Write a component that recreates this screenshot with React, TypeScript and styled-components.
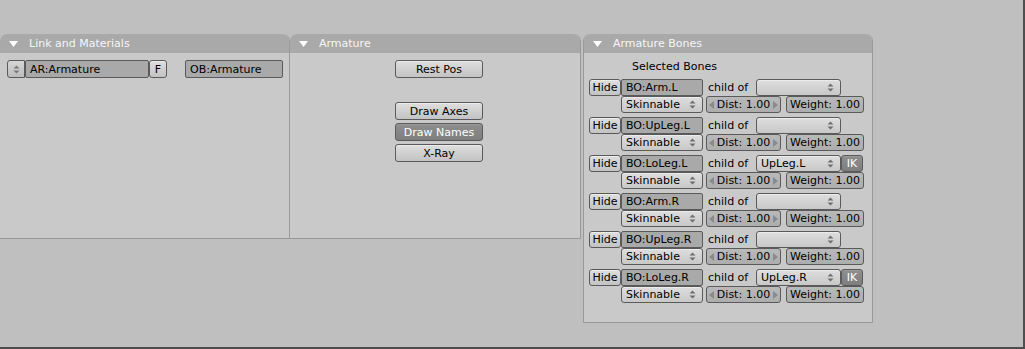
import React from 'react'
import styled, { createGlobalStyle } from 'styled-components'

const GlobalStyle = createGlobalStyle`
  html, body {
    margin: 0;
    padding: 0;
    background: #bebebe;
  }
  body {
    font-family: "DejaVu Sans", "Liberation Sans", sans-serif;
    font-size: 11px;
    color: #000;
  }
`

const Window = styled.div`
  width: 1025px;
  height: 349px;
  box-sizing: border-box;
  padding-top: 34px;
  background: #bfbfbf;
  border-right: 2px solid #4e4e4e;
  border-bottom: 2px solid #4e4e4e;

  display: flex;
  align-items: flex-start;
`

const Panel = styled.div<{ $w: number; $h: number; $gap?: number; $leftLine?: boolean }>`
  width: ${p => p.$w}px;
  height: ${p => p.$h}px;
  margin-left: ${p => p.$gap || 0}px;
  box-sizing: border-box;
  display: flex;
  flex-direction: column;
  background: #c9c9c9;
  border-right: 1px solid #999;
  border-bottom: 1px solid #999;
  border-left: ${p => (p.$leftLine ? '1px solid #999' : 'none')};
  border-radius: 7px 7px 0 0;
`

const Header = styled.div`
  height: 19px;
  flex-shrink: 0;
  display: flex;
  align-items: center;
  gap: 11px;
  padding-left: 9px;
  background: #a9a9a9;
  border-radius: 7px 7px 0 0;
  color: #f6f6f6;
  font-size: 11px;
`

const Body = styled.div<{ $pad: string }>`
  padding: ${p => p.$pad};
  display: flex;
  flex-direction: column;
`

const Row = styled.div<{ $gap?: number; $indent?: number; $h?: number }>`
  display: flex;
  align-items: center;
  height: ${p => p.$h || 18}px;
  margin-left: ${p => p.$indent || 0}px;
  gap: ${p => p.$gap || 0}px;
`

const Btn = styled.div<{ $w: number; $h?: number; $on?: boolean }>`
  width: ${p => p.$w}px;
  height: ${p => p.$h || 18}px;
  box-sizing: border-box;
  display: flex;
  align-items: center;
  justify-content: center;
  border: 1px solid #5a5a5a;
  border-radius: 3px;
  color: ${p => (p.$on ? '#fff' : '#000')};
  background: ${p =>
    p.$on
      ? 'linear-gradient(#8e8e8e, #7e7e7e)'
      : 'linear-gradient(#dedede, #c3c3c3)'};
  box-shadow: ${p => (p.$on ? 'inset 0 1px #9a9a9a' : 'inset 0 1px #ececec')};
  white-space: nowrap;
`

const Field = styled.div<{ $w: number; $h?: number; $gap?: number }>`
  width: ${p => p.$w}px;
  height: ${p => p.$h || 18}px;
  margin-left: ${p => p.$gap || 0}px;
  box-sizing: border-box;
  display: flex;
  align-items: center;
  padding-left: 4px;
  background: #a9a9a9;
  border: 1px solid #5a5a5a;
  border-radius: 2px;
  white-space: nowrap;
`

const Menu = styled.div<{ $w: number; $h?: number }>`
  width: ${p => p.$w}px;
  height: ${p => p.$h || 17}px;
  box-sizing: border-box;
  display: flex;
  align-items: center;
  justify-content: space-between;
  padding: 0 6px 0 4px;
  border: 1px solid #5a5a5a;
  border-radius: 3px;
  background: linear-gradient(#dedede, #c8c8c8);
  box-shadow: inset 0 1px #ececec;
  white-space: nowrap;
`

const Num = styled.div<{ $w: number; $faint?: boolean }>`
  width: ${p => p.$w}px;
  height: 17px;
  box-sizing: border-box;
  display: flex;
  align-items: center;
  justify-content: space-between;
  padding: 0 2px;
  border: 1px solid #5a5a5a;
  border-radius: 3px;
  background: linear-gradient(#b9b9b9, #adadad);
  color: #000;
  white-space: nowrap;

  svg {
    opacity: ${p => (p.$faint ? 0.35 : 1)};
  }
`

const Label = styled.span<{ $w: number; $pad?: number }>`
  width: ${p => p.$w}px;
  padding-left: ${p => p.$pad || 0}px;
  box-sizing: border-box;
  white-space: nowrap;
`

const Title = styled.div`
  height: 26px;
  display: flex;
  align-items: center;
  padding-left: 43px;
`

const Stack = styled.div`
  display: flex;
  flex-direction: column;
  gap: 3px;
  margin-top: 24px;
`

const Group = styled.div`
  display: flex;
  flex-direction: column;
  margin-bottom: 4px;
`

const ArrowBtn = styled.div`
  width: 18px;
  height: 18px;
  box-sizing: border-box;
  display: flex;
  align-items: center;
  justify-content: center;
  border: 1px solid #5a5a5a;
  border-radius: 3px 0 0 3px;
  background: linear-gradient(#d6d6d6, #bcbcbc);
`

const Triangle = () => (
  <svg width="9" height="6" viewBox="0 0 9 6">
    <path d="M0 0 H9 L4.5 6 Z" fill="#fff" />
  </svg>
)

const UpDown = ({ color = '#6e6e6e' }: { color?: string }) => (
  <svg width="7" height="9" viewBox="0 0 7 9">
    <path d="M0.5 3.5 L3.5 0.5 L6.5 3.5 Z M0.5 5.5 L3.5 8.5 L6.5 5.5 Z" fill={color} />
  </svg>
)

const Arrow = ({ dir }: { dir: 'l' | 'r' }) => (
  <svg width="5" height="8" viewBox="0 0 5 8">
    <path d={dir === 'l' ? 'M5 0 L0 4 L5 8 Z' : 'M0 0 L5 4 L0 8 Z'} fill="#8a8a8a" />
  </svg>
)

type Bone = { name: string; parent?: string }

const bones: Bone[] = [
  { name: 'BO:Arm.L' },
  { name: 'BO:UpLeg.L' },
  { name: 'BO:LoLeg.L', parent: 'UpLeg.L' },
  { name: 'BO:Arm.R' },
  { name: 'BO:UpLeg.R' },
  { name: 'BO:LoLeg.R', parent: 'UpLeg.R' },
]

const BoneGroup = ({ bone }: { bone: Bone }) => (
  <Group>
    <Row $h={17}>
      <Btn $w={32} $h={17}>Hide</Btn>
      <Field $w={82} $h={17}>{bone.name}</Field>
      <Label $w={53} $pad={5}>child of</Label>
      <Menu $w={85}>
        <span>{bone.parent || ''}</span>
        <UpDown />
      </Menu>
      {bone.parent && (
        <Btn $w={22} $h={17} $on>IK</Btn>
      )}
    </Row>
    <Row $h={17} $indent={32}>
      <Menu $w={82}>
        <span>Skinnable</span>
        <UpDown />
      </Menu>
      <Row $h={17} $gap={5} $indent={3}>
        <Num $w={75}>
          <Arrow dir="l" />
          <span>Dist: 1.00</span>
          <Arrow dir="r" />
        </Num>
        <Num $w={78} $faint>
          <Arrow dir="l" />
          <span>Weight: 1.00</span>
          <Arrow dir="r" />
        </Num>
      </Row>
    </Row>
  </Group>
)

const App: React.FC = () => {
  return (
    <>
      <GlobalStyle />
      <Window>
        <Panel $w={290} $h={205}>
          <Header>
            <Triangle />
            <span>Link and Materials</span>
          </Header>
          <Body $pad="7px 0 0 7px">
            <Row>
              <ArrowBtn>
                <UpDown color="#7a7a7a" />
              </ArrowBtn>
              <Field $w={124}>AR:Armature</Field>
              <Btn $w={18}>F</Btn>
              <Field $w={98} $gap={18}>OB:Armature</Field>
            </Row>
          </Body>
        </Panel>

        <Panel $w={291} $h={205}>
          <Header>
            <Triangle />
            <span>Armature</span>
          </Header>
          <Body $pad="7px 0 0 105px">
            <Btn $w={88}>Rest Pos</Btn>
            <Stack>
              <Btn $w={88}>Draw Axes</Btn>
              <Btn $w={88} $on>Draw Names</Btn>
              <Btn $w={88}>X-Ray</Btn>
            </Stack>
          </Body>
        </Panel>

        <Panel $w={290} $h={289} $gap={2} $leftLine>
          <Header>
            <Triangle />
            <span>Armature Bones</span>
          </Header>
          <Body $pad="0 0 0 5px">
            <Title>Selected Bones</Title>
            {bones.map(b => (
              <BoneGroup key={b.name} bone={b} />
            ))}
          </Body>
        </Panel>
      </Window>
    </>
  )
}

export default App
